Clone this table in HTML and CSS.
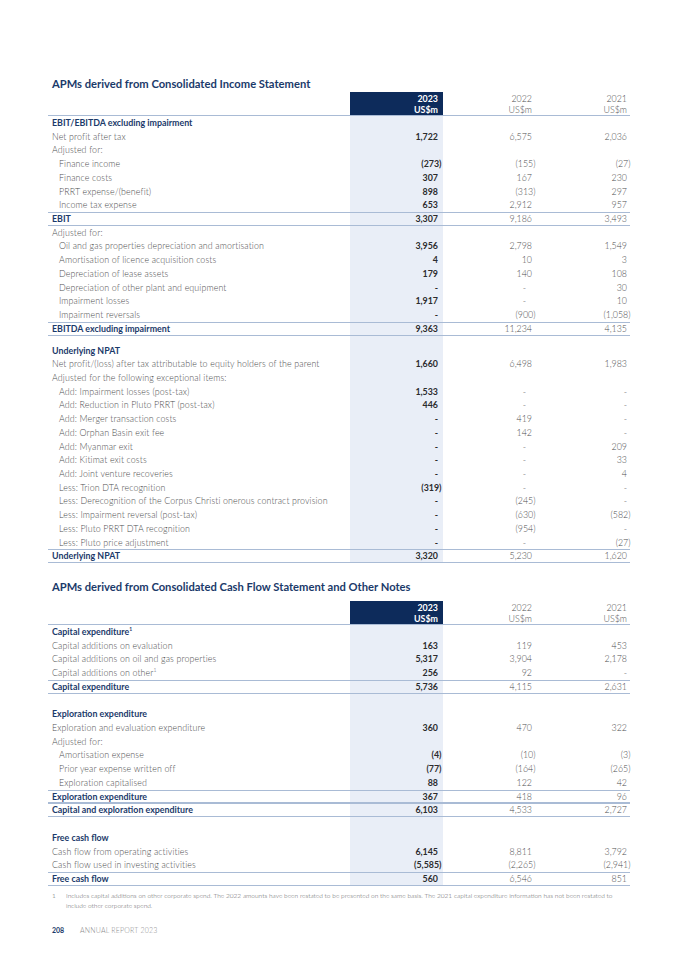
FILE: index.html
```html
<!DOCTYPE html>
<html lang="en">
<head>
<meta charset="utf-8">
<title>APMs</title>
<link rel="stylesheet" href="styles.css">
</head>
<body>
<main class="page">
  <h2 class="title t1">APMs derived from Consolidated Income Statement</h2>
  <table class="apm">
    <colgroup><col class="c-label"><col class="c-y23"><col class="c-y22"><col class="c-y21"></colgroup>
    <thead>
      <tr class="head"><th></th><th class="y23">2023<br>US$m</th><th class="y22">2022<br>US$m</th><th class="y21">2021<br>US$m</th></tr>
    </thead>
    <tbody>
      <tr class="sub"><td>EBIT/EBITDA excluding impairment</td><td class="y23"></td><td></td><td></td></tr>
      <tr><td>Net profit after tax</td><td class="y23">1,722</td><td class="y22">6,575</td><td class="y21">2,036</td></tr>
      <tr><td>Adjusted for:</td><td class="y23"></td><td></td><td></td></tr>
      <tr class="ind"><td>Finance income</td><td class="y23"><span class="neg">(273)</span></td><td class="y22"><span class="neg">(155)</span></td><td class="y21"><span class="neg">(27)</span></td></tr>
      <tr class="ind"><td>Finance costs</td><td class="y23">307</td><td class="y22">167</td><td class="y21">230</td></tr>
      <tr class="ind"><td>PRRT expense/(benefit)</td><td class="y23">898</td><td class="y22"><span class="neg">(313)</span></td><td class="y21">297</td></tr>
      <tr class="ind pre"><td>Income tax expense</td><td class="y23">653</td><td class="y22">2,912</td><td class="y21">957</td></tr>
      <tr class="total"><td>EBIT</td><td class="y23">3,307</td><td class="y22">9,186</td><td class="y21">3,493</td></tr>
      <tr><td>Adjusted for:</td><td class="y23"></td><td></td><td></td></tr>
      <tr class="ind"><td>Oil and gas properties depreciation and amortisation</td><td class="y23">3,956</td><td class="y22">2,798</td><td class="y21">1,549</td></tr>
      <tr class="ind"><td>Amortisation of licence acquisition costs</td><td class="y23">4</td><td class="y22">10</td><td class="y21">3</td></tr>
      <tr class="ind"><td>Depreciation of lease assets</td><td class="y23">179</td><td class="y22">140</td><td class="y21">108</td></tr>
      <tr class="ind"><td>Depreciation of other plant and equipment</td><td class="y23">-</td><td class="y22"><span class="dash">-</span></td><td class="y21">30</td></tr>
      <tr class="ind"><td>Impairment losses</td><td class="y23">1,917</td><td class="y22"><span class="dash">-</span></td><td class="y21">10</td></tr>
      <tr class="ind"><td>Impairment reversals</td><td class="y23">-</td><td class="y22"><span class="neg">(900)</span></td><td class="y21"><span class="neg">(1,058)</span></td></tr>
      <tr class="total"><td>EBITDA excluding impairment</td><td class="y23">9,363</td><td class="y22">11,234</td><td class="y21">4,135</td></tr>
      <tr class="gap"><td></td><td class="y23"></td><td></td><td></td></tr>
      <tr class="sub"><td>Underlying NPAT</td><td class="y23"></td><td></td><td></td></tr>
      <tr><td>Net profit/(loss) after tax attributable to equity holders of the parent</td><td class="y23">1,660</td><td class="y22">6,498</td><td class="y21">1,983</td></tr>
      <tr><td>Adjusted for the following exceptional items:</td><td class="y23"></td><td></td><td></td></tr>
      <tr class="ind"><td>Add: Impairment losses (post-tax)</td><td class="y23">1,533</td><td class="y22"><span class="dash">-</span></td><td class="y21">-</td></tr>
      <tr class="ind"><td>Add: Reduction in Pluto PRRT (post-tax)</td><td class="y23">446</td><td class="y22"><span class="dash">-</span></td><td class="y21">-</td></tr>
      <tr class="ind"><td>Add: Merger transaction costs</td><td class="y23">-</td><td class="y22">419</td><td class="y21">-</td></tr>
      <tr class="ind"><td>Add: Orphan Basin exit fee</td><td class="y23">-</td><td class="y22">142</td><td class="y21">-</td></tr>
      <tr class="ind"><td>Add: Myanmar exit</td><td class="y23">-</td><td class="y22"><span class="dash">-</span></td><td class="y21">209</td></tr>
      <tr class="ind"><td>Add: Kitimat exit costs</td><td class="y23">-</td><td class="y22"><span class="dash">-</span></td><td class="y21">33</td></tr>
      <tr class="ind"><td>Add: Joint venture recoveries</td><td class="y23">-</td><td class="y22"><span class="dash">-</span></td><td class="y21">4</td></tr>
      <tr class="ind"><td>Less: Trion DTA recognition</td><td class="y23"><span class="neg">(319)</span></td><td class="y22"><span class="dash">-</span></td><td class="y21">-</td></tr>
      <tr class="ind"><td>Less: Derecognition of the Corpus Christi onerous contract provision</td><td class="y23">-</td><td class="y22"><span class="neg">(245)</span></td><td class="y21">-</td></tr>
      <tr class="ind"><td>Less: Impairment reversal (post-tax)</td><td class="y23">-</td><td class="y22"><span class="neg">(630)</span></td><td class="y21"><span class="neg">(582)</span></td></tr>
      <tr class="ind"><td>Less: Pluto PRRT DTA recognition</td><td class="y23">-</td><td class="y22"><span class="neg">(954)</span></td><td class="y21">-</td></tr>
      <tr class="ind"><td>Less: Pluto price adjustment</td><td class="y23">-</td><td class="y22"><span class="dash">-</span></td><td class="y21"><span class="neg">(27)</span></td></tr>
      <tr class="total"><td>Underlying NPAT</td><td class="y23">3,320</td><td class="y22">5,230</td><td class="y21">1,620</td></tr>
    </tbody>
  </table>

  <h2 class="title t2">APMs derived from Consolidated Cash Flow Statement and Other Notes</h2>
  <table class="apm">
    <colgroup><col class="c-label"><col class="c-y23"><col class="c-y22"><col class="c-y21"></colgroup>
    <thead>
      <tr class="head"><th></th><th class="y23">2023<br>US$m</th><th class="y22">2022<br>US$m</th><th class="y21">2021<br>US$m</th></tr>
    </thead>
    <tbody>
      <tr class="sub"><td>Capital expenditure<sup>1</sup></td><td class="y23"></td><td></td><td></td></tr>
      <tr><td>Capital additions on evaluation</td><td class="y23">163</td><td class="y22">119</td><td class="y21">453</td></tr>
      <tr><td>Capital additions on oil and gas properties</td><td class="y23">5,317</td><td class="y22">3,904</td><td class="y21">2,178</td></tr>
      <tr><td>Capital additions on other<sup>1</sup></td><td class="y23">256</td><td class="y22">92</td><td class="y21">-</td></tr>
      <tr class="total"><td>Capital expenditure</td><td class="y23">5,736</td><td class="y22">4,115</td><td class="y21">2,631</td></tr>
      <tr class="blank"><td></td><td class="y23"></td><td></td><td></td></tr>
      <tr class="sub"><td>Exploration expenditure</td><td class="y23"></td><td></td><td></td></tr>
      <tr><td>Exploration and evaluation expenditure</td><td class="y23">360</td><td class="y22">470</td><td class="y21">322</td></tr>
      <tr><td>Adjusted for:</td><td class="y23"></td><td></td><td></td></tr>
      <tr class="ind"><td>Amortisation expense</td><td class="y23"><span class="neg">(4)</span></td><td class="y22"><span class="neg">(10)</span></td><td class="y21"><span class="neg">(3)</span></td></tr>
      <tr class="ind"><td>Prior year expense written off</td><td class="y23"><span class="neg">(77)</span></td><td class="y22"><span class="neg">(164)</span></td><td class="y21"><span class="neg">(265)</span></td></tr>
      <tr class="ind"><td>Exploration capitalised</td><td class="y23">88</td><td class="y22">122</td><td class="y21">42</td></tr>
      <tr class="total"><td>Exploration expenditure</td><td class="y23">367</td><td class="y22">418</td><td class="y21">96</td></tr>
      <tr class="total"><td>Capital and exploration expenditure</td><td class="y23">6,103</td><td class="y22">4,533</td><td class="y21">2,727</td></tr>
      <tr class="blank"><td></td><td class="y23"></td><td></td><td></td></tr>
      <tr class="sub"><td>Free cash flow</td><td class="y23"></td><td></td><td></td></tr>
      <tr><td>Cash flow from operating activities</td><td class="y23">6,145</td><td class="y22">8,811</td><td class="y21">3,792</td></tr>
      <tr><td>Cash flow used in investing activities</td><td class="y23"><span class="neg">(5,585)</span></td><td class="y22"><span class="neg">(2,265)</span></td><td class="y21"><span class="neg">(2,941)</span></td></tr>
      <tr class="total"><td>Free cash flow</td><td class="y23">560</td><td class="y22">6,546</td><td class="y21">851</td></tr>
    </tbody>
  </table>

  <p class="footnote"><span class="fn-num">1</span><span class="fn-text">Includes capital additions on other corporate spend. The 2022 amounts have been restated to be presented on the same basis. The 2021 capital expenditure information has not been restated to include other corporate spend.</span></p>

  <footer class="folio"><span class="folio-num">208</span><span class="folio-title">ANNUAL REPORT 2023</span></footer>
</main>
</body>
</html>
```

FILE: styles.css
```css
html, body {
  margin: 0;
  padding: 0;
  background: #ffffff;
}
body {
  font-family: "Lato", "Open Sans", sans-serif;
  font-weight: 300;
  color: #4e4e50;
  width: 679px;
  height: 960px;
  overflow: hidden;
}
.page {
  padding: 77px 0 0 48px;
}
.title {
  margin: 0;
  padding-left: 4px;
  font-size: 11.2px;
  line-height: 14px;
  font-weight: 700;
  color: #1b3a6a;
}
.t1 { margin-bottom: 1px; }
.t2 { margin-top: 17px; margin-bottom: 7px; }

.apm {
  width: 582px;
  table-layout: fixed;
  border-collapse: collapse;
  border-spacing: 0;
  font-size: 8.85px;
}
.c-label { width: 302px; }
.c-y23 { width: 93px; }
.c-y22 { width: 94px; }
.c-y21 { width: 93px; }

.apm td, .apm th {
  padding: 0;
  height: 13.72px;
  line-height: 13.72px;
  white-space: nowrap;
  vertical-align: middle;
}
.apm td:first-child { padding-left: 4px; letter-spacing: 0.12px; }
.apm .ind td:first-child { padding-left: 11px; }

.apm .y23 { text-align: right; padding-right: 5px; background-color: #e9eef7; color: #2b2b2d; font-weight: 700; }
.apm .y22 { text-align: right; padding-right: 5px; }
.apm .y21 { text-align: right; padding-right: 3px; }

.head th {
  height: 24px;
  line-height: 11px;
  font-weight: 300;
  vertical-align: middle;
  background-image: linear-gradient(#a9bbd5, #a9bbd5);
  background-size: 100% 1px;
  background-position: bottom;
  background-repeat: no-repeat;
}
.head th.y23 {
  background-color: #0d2b5b;
  color: #ffffff;
  font-weight: 700;
}

.sub td:first-child, .total td:first-child {
  color: #1b3a6a;
  font-weight: 700;
  letter-spacing: 0;
}
.total td {
  background-image: linear-gradient(#a9bbd5, #a9bbd5), linear-gradient(#a9bbd5, #a9bbd5);
  background-size: 100% 1px, 100% 1px;
  background-position: top, bottom;
  background-repeat: no-repeat;
}
.apm .gap td { height: 8px; line-height: 8px; }

.neg { margin-right: -3.5px; }
.dash { margin-right: 6px; }

sup {
  font-size: 5px;
  line-height: 0;
  vertical-align: 4px;
}

.footnote {
  margin: 5px 0 0 0;
  display: flex;
  font-size: 6.55px;
  line-height: 10px;
  color: #606062;
}
.fn-num { width: 18px; padding-left: 4px; box-sizing: border-box; flex: none; }
.fn-text { width: 556px; }

.folio {
  margin-top: 15px;
  padding-left: 4px;
  display: flex;
  align-items: baseline;
  font-size: 7px;
}
.folio-num { width: 28px; font-weight: 700; color: #1b3a6a; }
.folio-title { color: #8a8a8c; letter-spacing: 0.2px; }
```
